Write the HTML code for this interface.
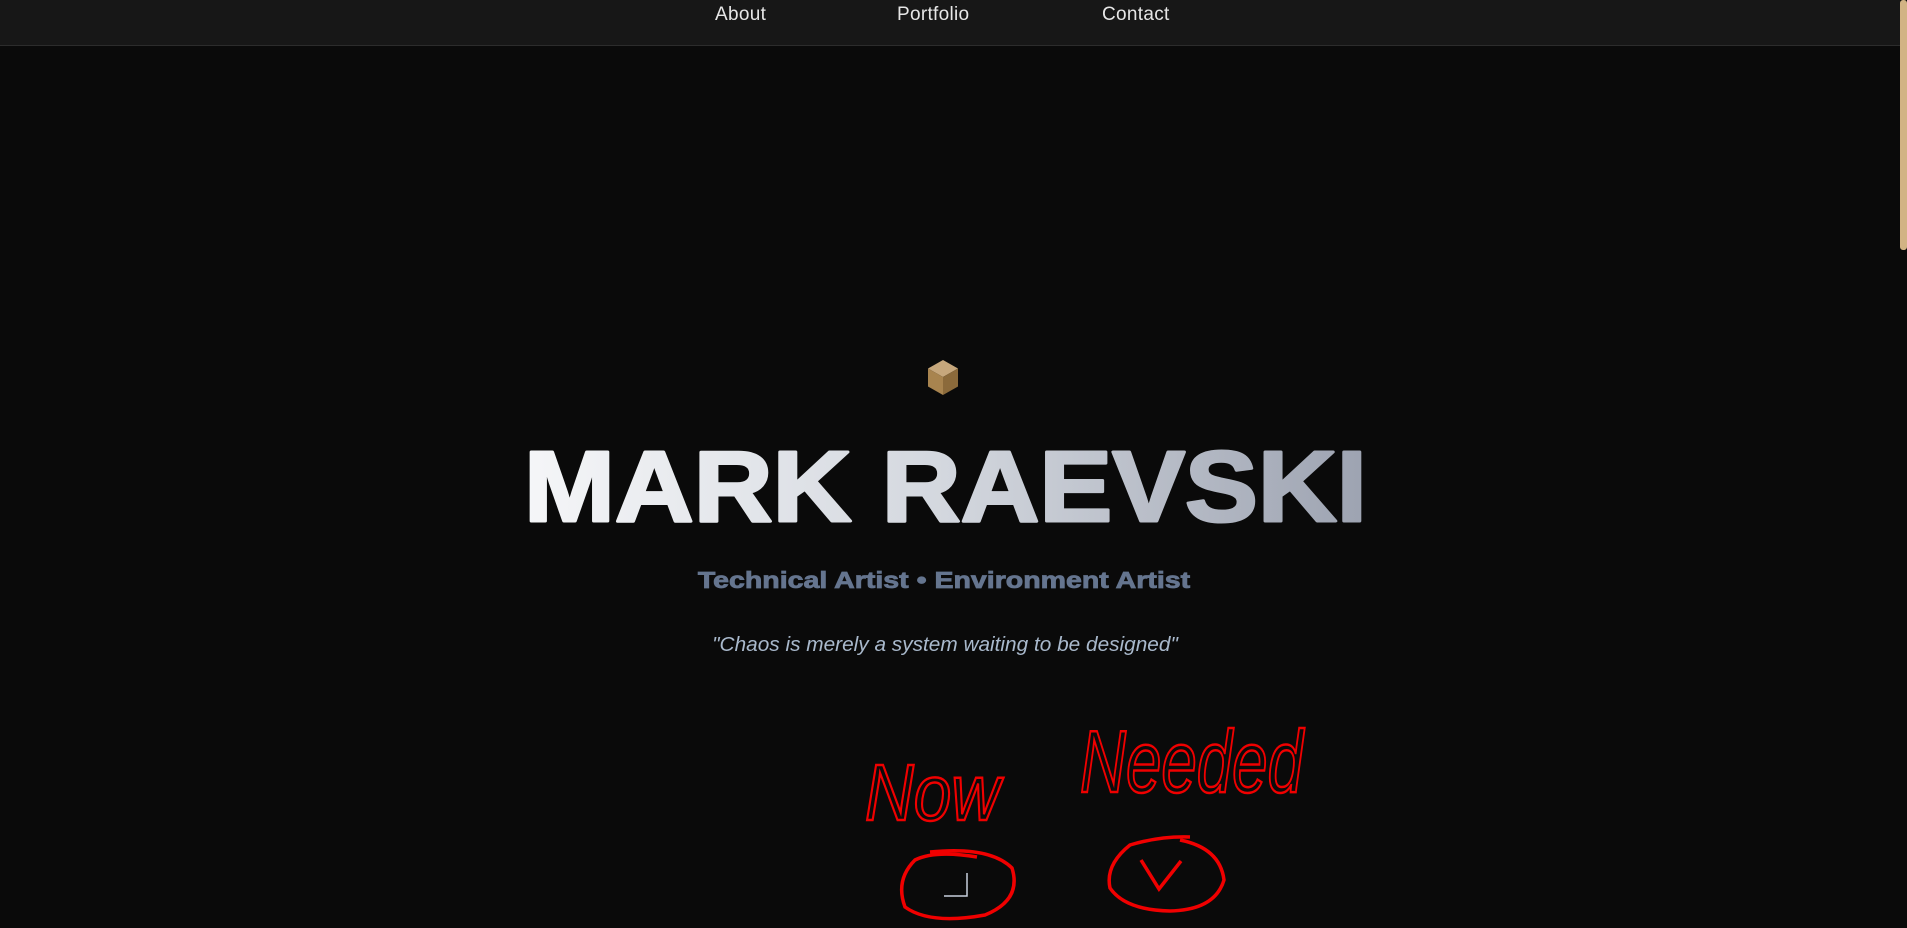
<!DOCTYPE html>
<html><head><meta charset="utf-8"><style>
html,body{margin:0;padding:0;width:1907px;height:928px;overflow:hidden;background:#0a0a0a;font-family:"Liberation Sans",sans-serif}
.nav{position:absolute;left:0;top:0;width:1900px;height:45px;background:#171717;border-bottom:1px solid #2c2c2c}
.nav span{position:absolute;top:4px;color:#e6e6e6;font-size:19px;letter-spacing:0.3px}
.sb{position:absolute;left:1900px;top:0;width:7px;height:250px;background:#d2b384;border-radius:3px}
.t{position:absolute;left:0;width:1886px;text-align:center;white-space:nowrap}
</style></head><body>
<div class="nav">
<span style="left:715px">About</span>
<span style="left:897px">Portfolio</span>
<span style="left:1102px">Contact</span>
</div>
<div class="sb"></div>
<svg style="position:absolute;left:926px;top:359px" width="34" height="38" viewBox="0 0 34 38">
<polygon points="17,1 32,9.5 17,18 2,9.5" fill="#c6a77c"/>
<polygon points="2,9.5 17,18 17,36 2,27.5" fill="#a8844f"/>
<polygon points="32,9.5 17,18 17,36 32,27.5" fill="#8b6a3b"/>
</svg>
<svg style="position:absolute;left:0;top:0" width="1907" height="928">
<defs><linearGradient id="g" x1="523" y1="0" x2="1368" y2="0" gradientUnits="userSpaceOnUse">
<stop offset="0" stop-color="#f5f6f8"/><stop offset="0.5" stop-color="#d3d7de"/><stop offset="1" stop-color="#9da3b1"/></linearGradient></defs>
<text x="524" y="521" textLength="843" lengthAdjust="spacingAndGlyphs" font-family="Liberation Sans, sans-serif" font-weight="bold" font-size="100" fill="url(#g)" stroke="url(#g)" stroke-width="3" stroke-linejoin="round">MARK RAEVSKI</text>
</svg>
<div class="t" style="top:567px;font-size:23px;font-weight:bold;color:#65758f;left:0;width:1888px;transform:scaleX(1.24);transform-origin:944px 0;-webkit-text-stroke:0.8px #65758f">Technical Artist • Environment Artist</div>
<div class="t" style="top:634px;font-size:20px;font-style:italic;color:#a9b9cc;width:1890px;transform:scaleX(1.04);transform-origin:945px 0">"Chaos is merely a system waiting to be designed"</div>
<svg style="position:absolute;left:0;top:0" width="1907" height="928">
<text x="865" y="820" textLength="135" lengthAdjust="spacingAndGlyphs" font-family="Liberation Sans, sans-serif" font-style="italic" font-size="80" fill="none" stroke="#f00000" stroke-width="2.5">Now</text>
<text x="1080" y="792" textLength="223" lengthAdjust="spacingAndGlyphs" font-family="Liberation Sans, sans-serif" font-style="italic" font-size="88" fill="none" stroke="#f00000" stroke-width="2.5">Needed</text>
<path d="M930,852 Q990,846 1012,868 Q1022,900 985,915 Q930,925 905,907 Q895,880 915,860 Q935,850 977,857" fill="none" stroke="#f00000" stroke-width="3.5"/>
<path d="M1190,837 Q1160,836 1130,845 Q1105,865 1110,888 Q1125,910 1170,911 Q1215,910 1224,880 Q1220,848 1180,840" fill="none" stroke="#f00000" stroke-width="3.5"/>
<path d="M1141,860 L1159,889 L1181,861" fill="none" stroke="#f00000" stroke-width="3.5"/>
<path d="M967,873 L967,896 L944,896" fill="none" stroke="#c8d0dc" stroke-width="1.5"/>
</svg>
</body></html>
